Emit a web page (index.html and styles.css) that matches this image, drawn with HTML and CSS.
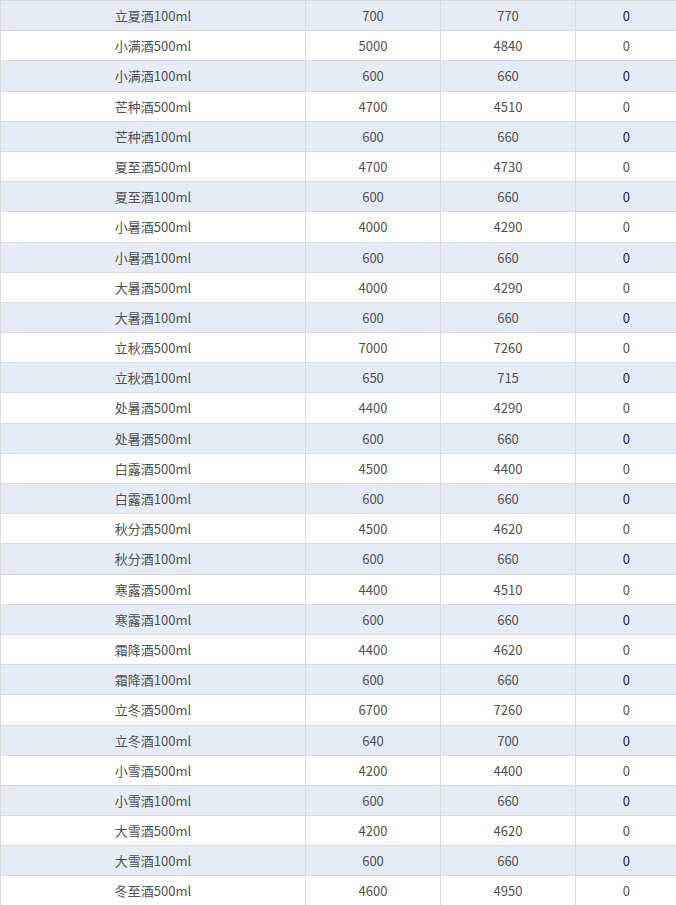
FILE: index.html
```html
<!DOCTYPE html>
<html lang="zh-CN">
<head>
<meta charset="utf-8">
<title>价格表</title>
<link rel="stylesheet" href="styles.css">
</head>
<body>
<table class="grid">
<colgroup><col class="c-name"><col class="c-num"><col class="c-num"><col class="c-last"></colgroup>
<tbody>
<tr class="alt"><td>立夏酒100ml</td><td>700</td><td>770</td><td class="z">0</td></tr>
<tr><td>小满酒500ml</td><td>5000</td><td>4840</td><td class="z">0</td></tr>
<tr class="alt"><td>小满酒100ml</td><td>600</td><td>660</td><td class="z">0</td></tr>
<tr><td>芒种酒500ml</td><td>4700</td><td>4510</td><td class="z">0</td></tr>
<tr class="alt"><td>芒种酒100ml</td><td>600</td><td>660</td><td class="z">0</td></tr>
<tr><td>夏至酒500ml</td><td>4700</td><td>4730</td><td class="z">0</td></tr>
<tr class="alt"><td>夏至酒100ml</td><td>600</td><td>660</td><td class="z">0</td></tr>
<tr><td>小暑酒500ml</td><td>4000</td><td>4290</td><td class="z">0</td></tr>
<tr class="alt"><td>小暑酒100ml</td><td>600</td><td>660</td><td class="z">0</td></tr>
<tr><td>大暑酒500ml</td><td>4000</td><td>4290</td><td class="z">0</td></tr>
<tr class="alt"><td>大暑酒100ml</td><td>600</td><td>660</td><td class="z">0</td></tr>
<tr><td>立秋酒500ml</td><td>7000</td><td>7260</td><td class="z">0</td></tr>
<tr class="alt"><td>立秋酒100ml</td><td>650</td><td>715</td><td class="z">0</td></tr>
<tr><td>处暑酒500ml</td><td>4400</td><td>4290</td><td class="z">0</td></tr>
<tr class="alt"><td>处暑酒500ml</td><td>600</td><td>660</td><td class="z">0</td></tr>
<tr><td>白露酒500ml</td><td>4500</td><td>4400</td><td class="z">0</td></tr>
<tr class="alt"><td>白露酒100ml</td><td>600</td><td>660</td><td class="z">0</td></tr>
<tr><td>秋分酒500ml</td><td>4500</td><td>4620</td><td class="z">0</td></tr>
<tr class="alt"><td>秋分酒100ml</td><td>600</td><td>660</td><td class="z">0</td></tr>
<tr><td>寒露酒500ml</td><td>4400</td><td>4510</td><td class="z">0</td></tr>
<tr class="alt"><td>寒露酒100ml</td><td>600</td><td>660</td><td class="z">0</td></tr>
<tr><td>霜降酒500ml</td><td>4400</td><td>4620</td><td class="z">0</td></tr>
<tr class="alt"><td>霜降酒100ml</td><td>600</td><td>660</td><td class="z">0</td></tr>
<tr><td>立冬酒500ml</td><td>6700</td><td>7260</td><td class="z">0</td></tr>
<tr class="alt"><td>立冬酒100ml</td><td>640</td><td>700</td><td class="z">0</td></tr>
<tr><td>小雪酒500ml</td><td>4200</td><td>4400</td><td class="z">0</td></tr>
<tr class="alt"><td>小雪酒100ml</td><td>600</td><td>660</td><td class="z">0</td></tr>
<tr><td>大雪酒500ml</td><td>4200</td><td>4620</td><td class="z">0</td></tr>
<tr class="alt"><td>大雪酒100ml</td><td>600</td><td>660</td><td class="z">0</td></tr>
<tr><td>冬至酒500ml</td><td>4600</td><td>4950</td><td class="z">0</td></tr>
</tbody>
</table>
</body>
</html>
```
FILE: styles.css
```css
html, body {
  margin: 0;
  padding: 0;
  background: #ffffff;
  overflow: hidden;
}
.grid {
  border-collapse: collapse;
  table-layout: fixed;
  width: 676px;
  font-family: "Noto Sans CJK SC", "Microsoft YaHei", sans-serif;
  font-size: 13px;
  color: #505050;
}
.c-name { width: 305px; }
.c-num { width: 135px; }
.c-last { width: 101px; }
.grid td {
  border: 1px solid #dcdcdc;
  padding: 0;
  height: 29.18px;
  line-height: 29.18px;
  text-align: center;
  white-space: nowrap;
  overflow: hidden;
}
.grid td.z {
  border-right: none;
  color: #505050;
}
.grid tr.alt td {
  background: #e6ecf5;
}
.grid tr.alt td.z {
  color: #14203c;
}
```
